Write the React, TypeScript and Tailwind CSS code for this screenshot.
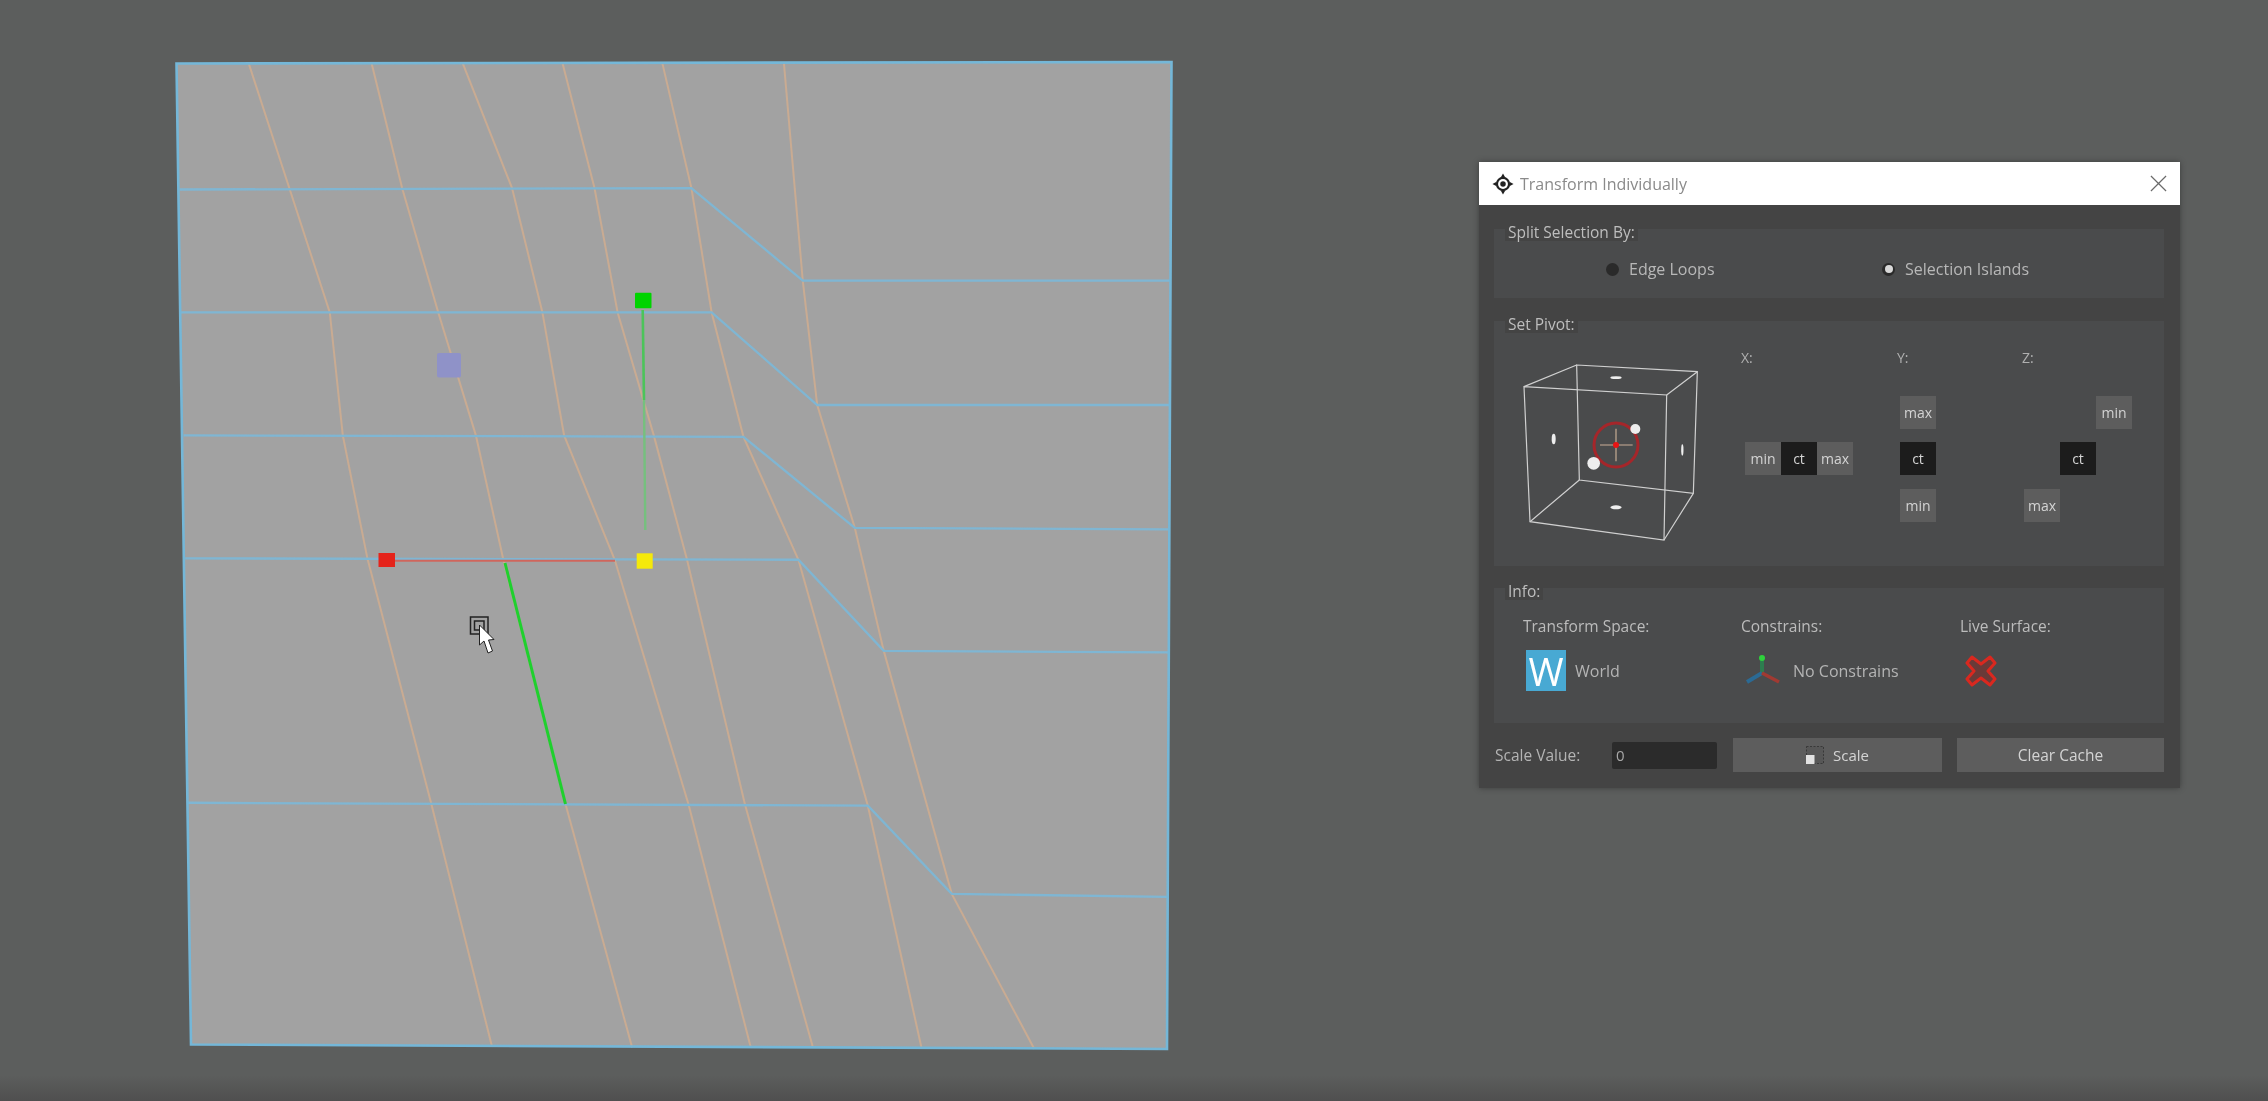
const S = 2268 / 1568;
const blue: number[][][] = [
  [[124, 131], [478, 130], [555, 194], [809, 194]],
  [[125, 216], [492, 216], [565, 280], [809, 280]],
  [[127, 301], [514, 302], [591, 365], [808, 366]],
  [[128, 386], [552, 387], [611, 450], [808, 451]],
  [[130, 555], [600, 557], [658, 618], [807, 620]],
];
const orange: number[][][] = [
  [[172, 44], [200, 130], [228, 216], [237, 301], [254, 386], [298, 555], [340, 723]],
  [[257, 44], [278, 130], [303, 216], [329, 301], [348, 387], [391, 556], [437, 724]],
  [[320, 44], [354, 130], [375, 216], [390, 301], [425, 387], [476, 556], [519, 724]],
  [[389, 44], [411, 130], [427, 216], [452, 301], [475, 387], [515, 556], [562, 724]],
  [[458, 44], [478, 130], [492, 216], [514, 302], [552, 387], [600, 557], [637, 724]],
  [[542, 44], [555, 194], [565, 280], [591, 365], [611, 450], [658, 618], [715, 725]],
];
const pts = (l: number[][]) => l.map(([x, y]) => `${x * S},${y * S}`).join(" ");

function Viewport() {
  return (
    <svg viewBox="0 0 2268 1101" className="absolute inset-0 h-[1101px] w-[2268px] blur-[0.5px]">
      <polygon points="176.5,63.5 1171.5,62 1167,1049 191,1044.5" fill="#a2a2a2" />
      {orange.map((l, i) => (
        <polyline key={i} points={pts(l)} fill="none" stroke="#c9ab92" strokeWidth="2" />
      ))}
      {blue.map((l, i) => (
        <polyline key={i} points={pts(l)} fill="none" stroke="#7fb6d3" strokeWidth="2.3" />
      ))}
      <polygon points="176.5,63.5 1171.5,62 1167,1049 191,1044.5" fill="none" stroke="#74b7d8" strokeWidth="2.6" />
      <rect x="437" y="353" width="24" height="24.5" rx="2" fill="#8f92c8" />
      <line x1="395" y1="560.7" x2="615" y2="560.7" stroke="#d0665c" strokeWidth="2" />
      <line x1="642.7" y1="310" x2="644" y2="400" stroke="#4cc45a" strokeWidth="2.6" />
      <line x1="644" y1="400" x2="645.3" y2="530" stroke="#75c07e" strokeWidth="2.4" />
      <line x1="505" y1="563" x2="565.5" y2="804" stroke="#1fd02e" strokeWidth="3" />
      <rect x="378.5" y="553" width="16.5" height="14" fill="#e5231a" />
      <rect x="636.7" y="553.3" width="16" height="15.4" fill="#f5e90a" />
      <rect x="635" y="292.7" width="16.5" height="15.6" rx="1" fill="#00d400" />
      <rect x="470.5" y="617" width="17.5" height="17" fill="none" stroke="#222" strokeWidth="1.5" />
      <rect x="474.5" y="621" width="9.5" height="9" fill="none" stroke="#222" strokeWidth="1.5" />
      <path d="M479.5 625 L479.5 645 L484 641 L488 653 L492.5 651 L488.5 640 L494 639.5 Z" fill="#fff" stroke="#222" strokeWidth="1" />
    </svg>
  );
}

function Cube() {
  return (
    <svg viewBox="0 0 690 600" className="h-[200px] w-[230px] shrink-0">
      <g fill="none" stroke="#d0d0d0" strokeWidth="3.6">
        <path d="M72 110 L500 135 L492 570 L90 515 Z" />
        <path d="M230 45 L592 65 L580 430 L238 390 Z" />
        <path d="M72 110 L230 45 M500 135 L592 65 M492 570 L580 430 M90 515 L238 390" />
      </g>
      <circle cx="348" cy="285" r="66" fill="none" stroke="#a5262a" strokeWidth="9" />
      <path d="M300 285 H398 M348 236 V334" stroke="#c9ad95" strokeWidth="3.5" />
      <circle cx="348" cy="285" r="9" fill="#e81414" />
      <circle cx="281" cy="340" r="19" fill="#eee" />
      <circle cx="406" cy="237" r="15" fill="#eee" />
      <ellipse cx="348" cy="83" rx="17" ry="4" fill="#eee" />
      <ellipse cx="348" cy="472" rx="17" ry="6" fill="#eee" />
      <ellipse cx="161" cy="267" rx="6" ry="16" fill="#eee" />
      <ellipse cx="547" cy="300" rx="3.5" ry="17" fill="#eee" />
    </svg>
  );
}

function Section({ title, className, children }: { title: string; className: string; children: React.ReactNode }) {
  return (
    <section className={`flow-root bg-[#4a4b4c] ${className}`}>
      <div className="ml-[11px] -mt-[6px] h-[18px] w-fit bg-[#444444] px-[3px] text-[15.5px] leading-[18px] text-[#bebebe]">{title}</div>
      {children}
    </section>
  );
}

function Btn({ label, dark, className }: { label: string; dark?: boolean; className: string }) {
  return (
    <button className={`flex h-[33px] w-[36px] items-center justify-center text-[14px] text-[#d4d4d4] ${dark ? "bg-[#1c1c1c]" : "bg-[#5d5d5d]"} ${className}`}>
      {label}
    </button>
  );
}

function Radio({ on, label, className }: { on?: boolean; label: string; className: string }) {
  return (
    <label className={`flex items-center gap-[10px] ${className}`}>
      <span className="flex h-[13px] w-[13px] items-center justify-center rounded-full bg-[#2a2a2a]">
        {on && <span className="h-[8px] w-[8px] rounded-full bg-[#d8d8d8]" />}
      </span>
      <span className="text-[16px] leading-[22px] text-[#b8b8b8]">{label}</span>
    </label>
  );
}

export default function App() {
  return (
    <div className="relative h-[1101px] w-[2268px] overflow-hidden bg-[linear-gradient(180deg,#5c5e5d_0,#5c5e5d_1075px,#4f4f4f_1101px)] font-['Open_Sans','Liberation_Sans',sans-serif]">
      <Viewport />
      <div className="absolute left-[1479px] top-[162px] w-[701px] bg-[#444444] shadow-[0_0_6px_rgba(0,0,0,0.35)] blur-[0.4px]">
        <header className="flex h-[43px] items-center bg-white pl-[13px] pr-[13px]">
          <svg viewBox="0 0 24 24" className="h-[22px] w-[22px]">
            <path d="M12 0.5 L14.5 5 H9.5 Z M12 23.5 L14.5 19 H9.5 Z M0.5 12 L5 14.5 V9.5 Z M23.5 12 L19 14.5 V9.5 Z" fill="#222" />
            <circle cx="12" cy="12" r="7.8" fill="#222" />
            <circle cx="12" cy="12" r="5.4" fill="#fff" />
            <circle cx="12" cy="12" r="3" fill="#222" />
          </svg>
          <span className="ml-[6px] text-[16px] text-[#8a8a8a]">Transform Individually</span>
          <svg viewBox="0 0 18 18" className="ml-auto h-[17px] w-[17px]">
            <path d="M1 1 L17 17 M17 1 L1 17" stroke="#6a6a6a" strokeWidth="1.3" />
          </svg>
        </header>
        <div className="pb-[16px] pl-[15px] pr-[16px]">
          <Section title="Split Selection By:" className="mt-[24px] h-[69px]">
            <div className="mt-[17px] flex pl-[112px]">
              <Radio label="Edge Loops" className="w-[276px]" />
              <Radio on label="Selection Islands" className="" />
            </div>
          </Section>
          <Section title="Set Pivot:" className="mt-[23px] h-[245px]">
            <div className="mt-[17px] flex pl-[6px]">
              <Cube />
              <div className="ml-[11px] w-[156px]">
                <div className="h-[16px] text-[14px] leading-[16px] text-[#b0b0b0]">X:</div>
                <div className="ml-[4px] mt-[29.5px] grid grid-cols-[36px_36px_36px] grid-rows-[33px_33px_33px] gap-y-[13.5px]">
                  <Btn label="min" className="col-start-1 row-start-2" />
                  <Btn label="ct" dark className="col-start-2 row-start-2" />
                  <Btn label="max" className="col-start-3 row-start-2" />
                </div>
              </div>
              <div className="w-[125px]">
                <div className="h-[16px] text-[14px] leading-[16px] text-[#b0b0b0]">Y:</div>
                <div className="ml-[3px] mt-[29.5px] grid grid-cols-[36px] grid-rows-[33px_33px_33px] gap-y-[13.5px]">
                  <Btn label="max" className="" />
                  <Btn label="ct" dark className="" />
                  <Btn label="min" className="" />
                </div>
              </div>
              <div>
                <div className="h-[16px] text-[14px] leading-[16px] text-[#b0b0b0]">Z:</div>
                <div className="ml-[2px] mt-[29.5px] grid grid-cols-[36px_36px_36px] grid-rows-[33px_33px_33px] gap-y-[13.5px]">
                  <Btn label="min" className="col-start-3 row-start-1" />
                  <Btn label="ct" dark className="col-start-2 row-start-2" />
                  <Btn label="max" className="col-start-1 row-start-3" />
                </div>
              </div>
            </div>
          </Section>
          <Section title="Info:" className="mt-[22px] h-[135px]">
            <div className="mt-[17px] flex pl-[29px]">
              <div className="w-[218px]">
                <div className="h-[18px] text-[15.5px] leading-[18px] text-[#bcbcbc]">Transform Space:</div>
                <div className="mt-[15px] flex h-[41px] items-center pl-[3px]">
                  <span className="flex h-[41px] w-[40px] items-center justify-center bg-[#48a9d3] text-[38px] font-medium leading-none text-white">W</span>
                  <span className="ml-[9px] text-[16px] text-[#b4b4b4]">World</span>
                </div>
              </div>
              <div className="w-[219px]">
                <div className="h-[18px] text-[15.5px] leading-[18px] text-[#bcbcbc]">Constrains:</div>
                <div className="mt-[15px] flex h-[41px] items-center pl-[4px]">
                  <svg viewBox="0 0 36 32" className="h-[32px] w-[36px]">
                    <path d="M17 3 V18" stroke="#2d7d4f" strokeWidth="4" />
                    <path d="M17 18 L2 27" stroke="#2b6a94" strokeWidth="4" />
                    <path d="M17 18 L34 27" stroke="#a13a32" strokeWidth="3.5" />
                    <circle cx="17" cy="3" r="3" fill="#2fd13c" />
                  </svg>
                  <span className="ml-[12px] text-[16px] text-[#b4b4b4]">No Constrains</span>
                </div>
              </div>
              <div>
                <div className="h-[18px] text-[15.5px] leading-[18px] text-[#bcbcbc]">Live Surface:</div>
                <div className="mt-[15px] flex h-[41px] items-center pl-[5px]">
                  <svg viewBox="0 0 32 32" className="h-[32px] w-[32px]">
                    <path d="M7 2 L16 9 L25 2 L30 8 L23 16 L30 24 L25 30 L16 23 L7 30 L2 24 L9 16 L2 8 Z" fill="#6a3a38" stroke="#d9281f" strokeWidth="3" strokeLinejoin="round" />
                  </svg>
                </div>
              </div>
            </div>
          </Section>
          <div className="mt-[15px] flex h-[34px] items-center">
            <span className="ml-[1px] mt-[1px] w-[117px] text-[15.5px] text-[#b4b4b4]">Scale Value:</span>
            <input readOnly value="0" className="h-[27px] w-[105px] rounded-[2px] bg-[#2b2b2b] px-[4px] text-[15px] text-[#a8a8a8] outline-none" />
            <button className="ml-[16px] flex h-[34px] w-[209px] items-center justify-center gap-[9px] bg-[#5d5d5d] text-[15px] text-[#d4d4d4]">
              <svg viewBox="0 0 18 18" className="h-[18px] w-[18px]">
                <rect x="0.5" y="0.5" width="17" height="17" fill="#575757" stroke="#393939" strokeDasharray="2 1.5" />
                <rect x="0" y="9" width="8.5" height="9" fill="#e2e2e2" />
              </svg>
              Scale
            </button>
            <button className="ml-[15px] h-[34px] flex-1 bg-[#5d5d5d] pt-[1px] text-[15.5px] text-[#d4d4d4]">Clear Cache</button>
          </div>
        </div>
      </div>
    </div>
  );
}
